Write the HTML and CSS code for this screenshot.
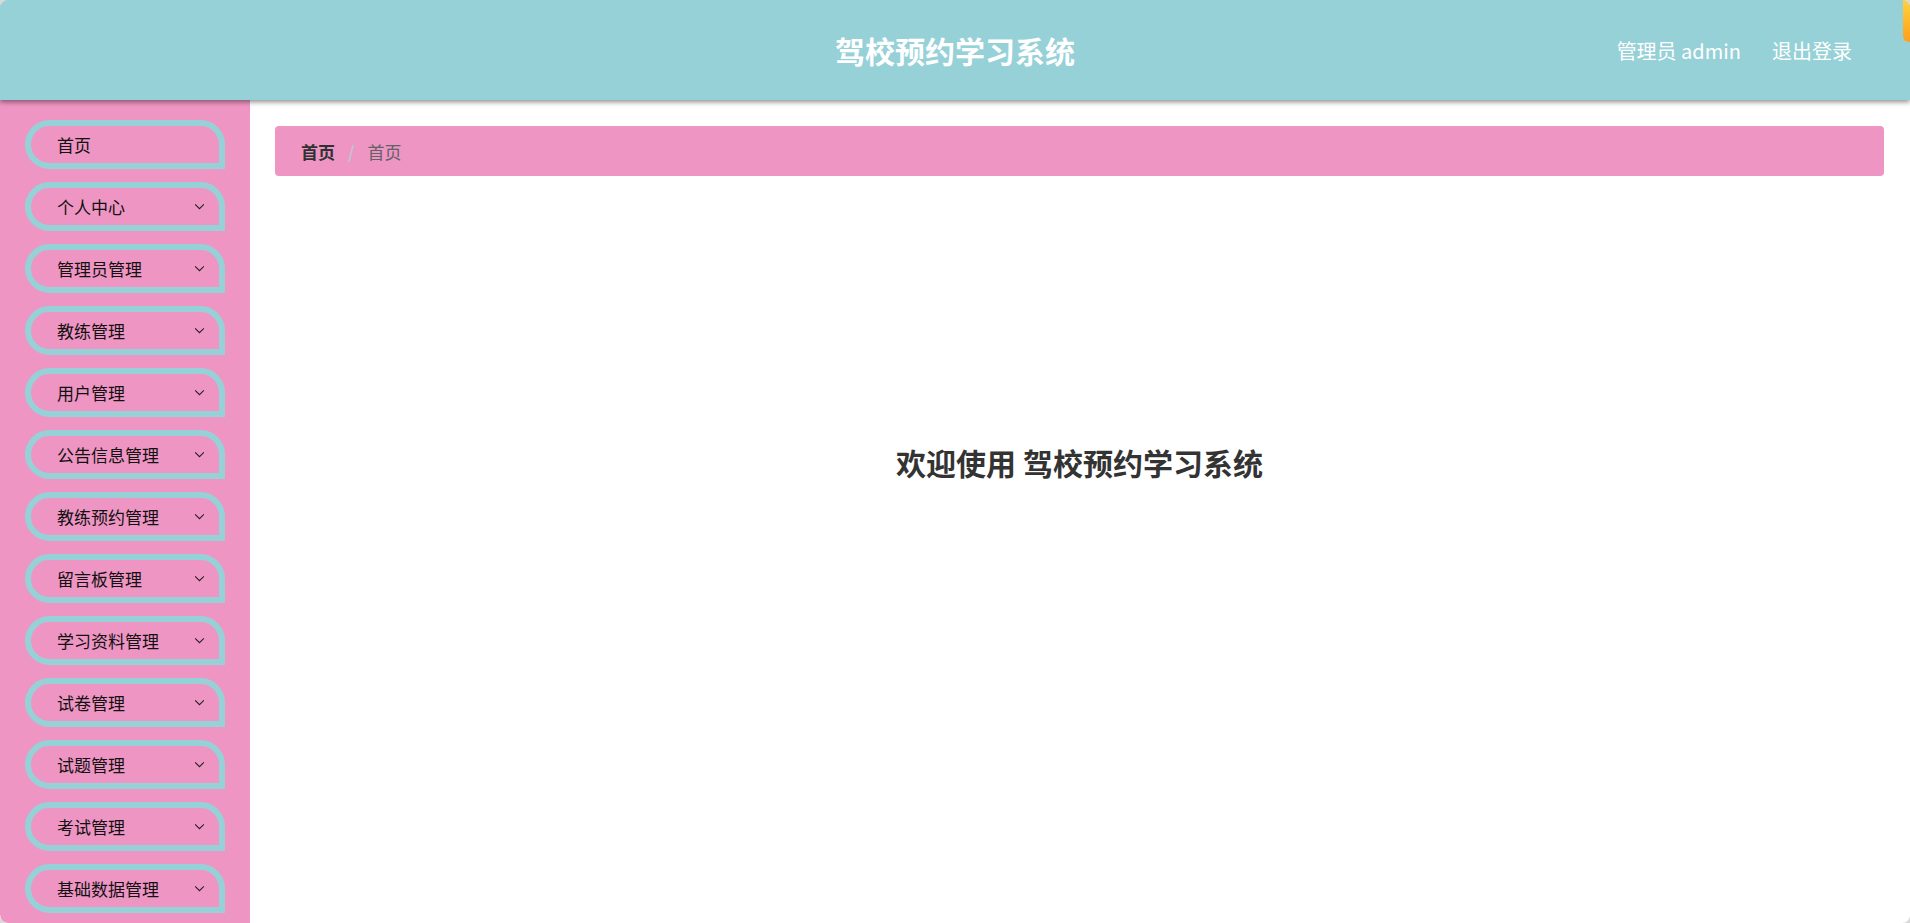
FILE: index.html
```html
<!DOCTYPE html>
<html lang="zh">
<head>
<meta charset="utf-8">
<title>驾校预约学习系统</title>
<link rel="stylesheet" href="styles.css">
</head>
<body>
<div class="app">
  <header class="topbar">
    <div class="title">驾校预约学习系统</div>
    <div class="user">
      <span class="who">管理员 admin</span>
      <span class="logout">退出登录</span>
    </div>
  </header>
  <div class="body">
    <aside class="sidebar">
      <div class="item"><span>首页</span></div>
      <div class="item"><span>个人中心</span><svg class="chev" viewBox="0 0 12 8"><path d="M1 1.5 L6 6.5 L11 1.5"/></svg></div>
      <div class="item"><span>管理员管理</span><svg class="chev" viewBox="0 0 12 8"><path d="M1 1.5 L6 6.5 L11 1.5"/></svg></div>
      <div class="item"><span>教练管理</span><svg class="chev" viewBox="0 0 12 8"><path d="M1 1.5 L6 6.5 L11 1.5"/></svg></div>
      <div class="item"><span>用户管理</span><svg class="chev" viewBox="0 0 12 8"><path d="M1 1.5 L6 6.5 L11 1.5"/></svg></div>
      <div class="item"><span>公告信息管理</span><svg class="chev" viewBox="0 0 12 8"><path d="M1 1.5 L6 6.5 L11 1.5"/></svg></div>
      <div class="item"><span>教练预约管理</span><svg class="chev" viewBox="0 0 12 8"><path d="M1 1.5 L6 6.5 L11 1.5"/></svg></div>
      <div class="item"><span>留言板管理</span><svg class="chev" viewBox="0 0 12 8"><path d="M1 1.5 L6 6.5 L11 1.5"/></svg></div>
      <div class="item"><span>学习资料管理</span><svg class="chev" viewBox="0 0 12 8"><path d="M1 1.5 L6 6.5 L11 1.5"/></svg></div>
      <div class="item"><span>试卷管理</span><svg class="chev" viewBox="0 0 12 8"><path d="M1 1.5 L6 6.5 L11 1.5"/></svg></div>
      <div class="item"><span>试题管理</span><svg class="chev" viewBox="0 0 12 8"><path d="M1 1.5 L6 6.5 L11 1.5"/></svg></div>
      <div class="item"><span>考试管理</span><svg class="chev" viewBox="0 0 12 8"><path d="M1 1.5 L6 6.5 L11 1.5"/></svg></div>
      <div class="item"><span>基础数据管理</span><svg class="chev" viewBox="0 0 12 8"><path d="M1 1.5 L6 6.5 L11 1.5"/></svg></div>
    </aside>
    <main class="main">
      <nav class="crumb">
        <span class="c1">首页</span>
        <span class="sep">/</span>
        <span class="c2">首页</span>
      </nav>
      <div class="welcome">欢迎使用 驾校预约学习系统</div>
    </main>
  </div>
  <div class="corner-tab"></div>
</div>
</body>
</html>
```

FILE: styles.css
```css
* { box-sizing: border-box; }
html, body { margin: 0; padding: 0; height: 100%; }
body {
  background: #d9d9d9;
  font-family: "Noto Sans CJK SC", "Noto Sans", sans-serif;
  overflow: hidden;
}
.app {
  position: relative;
  width: 1910px;
  height: 923px;
  background: #fff;
  border-radius: 8px;
  overflow: hidden;
  display: flex;
  flex-direction: column;
}
.topbar {
  position: relative;
  z-index: 2;
  flex: 0 0 100px;
  height: 100px;
  background: #96d1d8;
  box-shadow: 0 2px 5px rgba(0,0,0,0.45);
  display: flex;
  align-items: center;
  justify-content: center;
}
.title {
  color: #fff;
  font-size: 30px;
  font-weight: 700;
}
.user {
  position: absolute;
  right: 58px;
  top: 0;
  height: 100px;
  display: flex;
  align-items: center;
  gap: 31px;
  color: #fff;
  font-size: 20px;
}
.body {
  flex: 1;
  display: flex;
  min-height: 0;
}
.sidebar {
  flex: 0 0 250px;
  width: 250px;
  background: #ef95c3;
  padding: 20px 25px 0 25px;
  display: flex;
  flex-direction: column;
  gap: 13px;
  border-bottom-left-radius: 8px;
}
.item {
  height: 49px;
  flex: 0 0 49px;
  border: 6px solid #96d1d8;
  border-radius: 25px 25px 0 25px;
  display: flex;
  align-items: center;
  justify-content: space-between;
  padding: 0 14px 0 26px;
  font-size: 17px;
  color: #111;
}
.chev {
  width: 11px;
  height: 7px;
  fill: none;
  stroke: #222;
  stroke-width: 1.2;
}
.main {
  flex: 1;
  padding: 26px 26px 0 25px;
  position: relative;
}
.crumb {
  height: 50px;
  background: #ef95c3;
  border-radius: 4px;
  display: flex;
  align-items: center;
  padding-left: 26px;
  font-size: 17px;
}
.c1 { font-weight: 700; color: #303133; }
.sep { color: #c0c4cc; margin: 0 13px; font-weight: 700; }
.c2 { color: #606266; }
.welcome {
  text-align: center;
  margin-top: 264px;
  font-size: 30px;
  font-weight: 700;
  color: #333;
}
.corner-tab {
  position: absolute;
  right: 0;
  top: 0;
  width: 7px;
  height: 42px;
  background: linear-gradient(#ffd23a, #ff9f1a);
  border-bottom-left-radius: 6px;
  z-index: 5;
}
```
